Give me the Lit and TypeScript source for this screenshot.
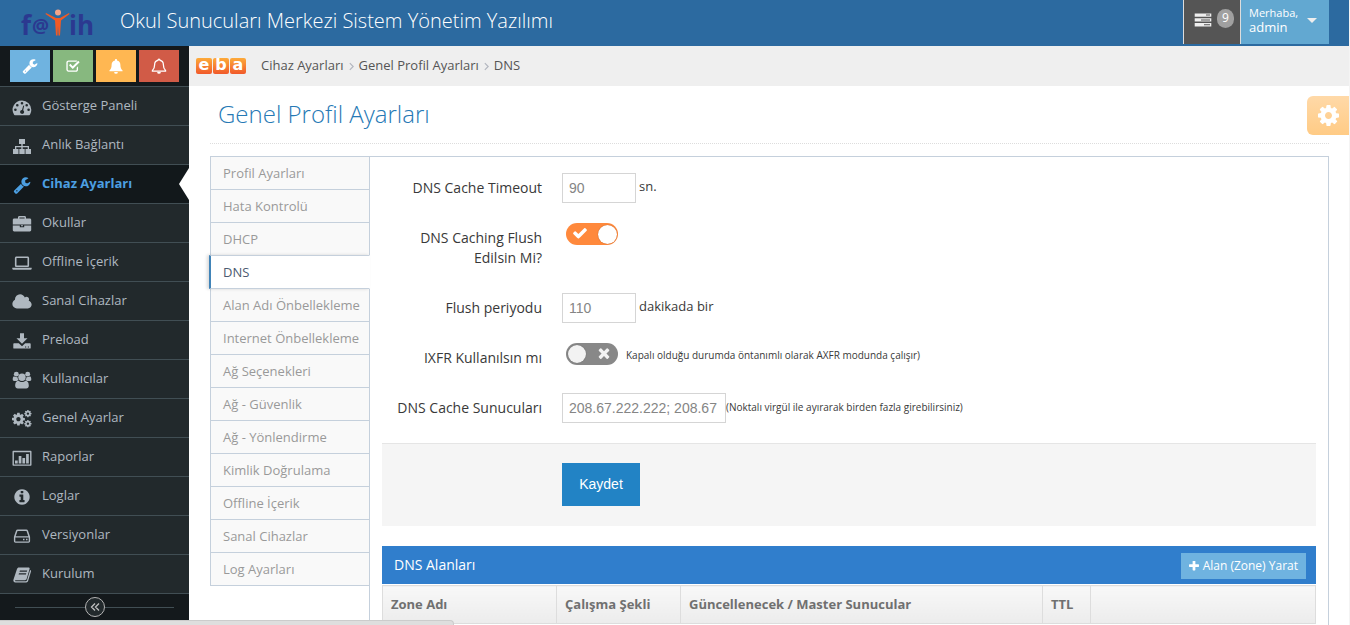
import { LitElement, html, svg, css, nothing } from 'lit';
import { customElement, property } from 'lit/decorators.js';
import { classMap } from 'lit/directives/class-map.js';

const COG =
  'M1152 896q0-106-75-181t-181-75-181 75-75 181 75 181 181 75 181-75 75-181zm512-109v222q0 12-8 23t-20 13l-185 28q-19 54-39 91 35 50 107 138 10 12 10 25t-9 23q-27 37-99 108t-94 71q-12 0-26-9l-138-108q-44 23-91 38-16 136-29 186-7 28-36 28h-222q-14 0-24.5-8.5t-11.5-21.5l-28-184q-49-16-90-37l-141 107q-10 9-25 9-14 0-25-11-126-114-165-168-7-10-7-23 0-12 8-23 15-21 51-66.5t54-70.5q-27-50-41-99l-183-27q-13-2-21-12.5t-8-23.5v-222q0-12 8-23t19-13l186-28q14-46 39-92-40-57-107-138-10-12-10-24 0-10 9-23 26-36 98.5-107.5t94.5-71.5q13 0 26 10l138 107q44-23 91-38 16-136 29-186 7-28 36-28h222q14 0 24.5 8.5t11.5 21.5l28 184q49 16 90 37l142-107q9-9 24-9 13 0 25 10 129 119 165 170 7 8 7 22 0 12-8 23-15 21-51 66.5t-54 70.5q26 50 41 98l183 28q13 2 21 12.5t8 23.5z';

const BELL = 'M10 1.2c.7 0 1.2.5 1.2 1.2v.5c2.600.5 4 2.600 4 5.200 0 3.600 1 5.400 2.600 6.700v.9H2.200v-.9C3.800 13.500 4.800 11.700 4.800 8.100c0-2.600 1.400-4.700 4-5.200v-.5c0-.7.5-1.200 1.200-1.200z';

type Glyph = { box: string; art: unknown };

const GLYPHS: Record<string, Glyph> = {
  wrench: {
    box: '0 0 1792 1792',
    art: svg`<path d="M448 1472q0-26-19-45t-45-19-45 19-19 45 19 45 45 19 45-19 19-45zm644-420l-682 682q-37 37-90 37-52 0-91-37l-106-108q-38-36-38-90 0-53 38-91l681-681q39 98 114.500 173.500t173.500 114.500zm634-435q0 39-23 106-47 134-164.500 217.500t-258.500 83.500q-185 0-316.500-131.500t-131.500-316.500 131.500-316.500 316.500-131.500q58 0 121.500 16.500t107.500 46.500q16 11 16 28t-16 28l-293 169v224l193 107q5-3 79-48.500t135.500-81 70.500-35.500q15 0 23.500 10t8.500 25z"/>`,
  },
  check: {
    box: '0 0 1792 1792',
    art: svg`<path d="M1671 566q0 40-28 68l-724 724-136 136q-28 28-68 28t-68-28l-136-136-362-362q-28-28-28-68t28-68l136-136q28-28 68-28t68 28l294 295 656-657q28-28 68-28t68 28l136 136q28 28 28 68z"/>`,
  },
  times: {
    box: '0 0 1792 1792',
    art: svg`<path d="M1490 1322q0 40-28 68l-136 136q-28 28-68 28t-68-28l-294-294-294 294q-28 28-68 28t-68-28l-136-136q-28-28-28-68t28-68l294-294-294-294q-28-28-28-68t28-68l136-136q28-28 68-28t68 28l294 294 294-294q28-28 68-28t68 28l136 136q28 28 28 68t-28 68l-294 294 294 294q28 28 28 68z"/>`,
  },
  plus: {
    box: '192 192 1408 1408',
    art: svg`<path d="M1600 736v192q0 40-28 68t-68 28h-416v416q0 40-28 68t-68 28h-192q-40 0-68-28t-28-68v-416h-416q-40 0-68-28t-28-68v-192q0-40 28-68t68-28h416v-416q0-40 28-68t68-28h192q40 0 68 28t28 68v416h416q40 0 68 28t28 68z"/>`,
  },
  cog: { box: '128 128 1536 1536', art: svg`<path d=${COG}/>` },
  cogs: {
    box: '0 0 20 18',
    art: svg`<path transform="translate(-1.100 1.600) scale(.00840)" d=${COG}/>
      <path transform="translate(11.700 -.6) scale(.00470)" d=${COG}/>
      <path transform="translate(11.700 9.500) scale(.00470)" d=${COG}/>`,
  },
  cloud: {
    box: '-64 0 1920 1792',
    art: svg`<path d="M1856 1152q0 159-112.500 271.500t-271.500 112.500h-1088q-185 0-316.500-131.500t-131.500-316.500q0-132 71-241.500t187-163.500q-2-28-2-43 0-212 150-362t362-150q158 0 286.500 88t187.500 230q70-62 166-62 106 0 181 75t75 181q0 75-41 138 129 30 213 134.500t84 239.500z"/>`,
  },
  info: {
    box: '0 0 1792 1792',
    art: svg`<path d="M1152 1376v-160q0-14-9-23t-23-9h-96v-512q0-14-9-23t-23-9h-320q-14 0-23 9t-9 23v160q0 14 9 23t23 9h96v320h-96q-14 0-23 9t-9 23v160q0 14 9 23t23 9h448q14 0 23-9t9-23zm-128-896v-160q0-14-9-23t-23-9h-192q-14 0-23 9t-9 23v160q0 14 9 23t23 9h192q14 0 23-9t9-23zm640 416q0 209-103 385.500t-279.500 279.500-385.500 103-385.500-103-279.500-279.500-103-385.500 103-385.500 279.500-279.500 385.500-103 385.500 103 279.500 279.500 103 385.500z"/>`,
  },
  gauge: {
    box: '0 0 20 18',
    art: svg`<path fill-rule="evenodd" d="M10 2.500a9.300 9.300 0 0 1 9.300 9.300c0 1.800-.5 3.500-1.400 5-.2.300-.4.400-.7.400H2.800c-.3 0-.5-.1-.7-.4A9.300 9.300 0 0 1 10 2.500zM3.400 10.500a1.300 1.300 0 1 0 0 2.600 1.300 1.300 0 0 0 0-2.600zM5.300 5.900a1.300 1.300 0 1 0 0 2.600 1.300 1.300 0 0 0 0-2.600zM10 4a1.300 1.300 0 1 0 0 2.600A1.300 1.300 0 0 0 10 4zM14.700 5.900a1.300 1.300 0 1 0 0 2.600 1.300 1.300 0 0 0 0-2.600zM16.600 10.500a1.300 1.300 0 1 0 0 2.600 1.300 1.300 0 0 0 0-2.600zM12.200 7.600l-1 .1-1.200 4.200a2 2 0 1 0 1.200.3z"/>`,
  },
  sitemap: {
    box: '0 0 20 18',
    art: svg`<path d="M7 2h6v5h-2.300v2H17v3h2v5h-5.500v-5h2.200v-1.700h-5V12h2v5H7.300v-5h2v-1.700h-5V12h2.200v5H1v-5h2V9h6.300V7H7z"/>`,
  },
  briefcase: {
    box: '0 0 20 18',
    art: svg`<path fill-rule="evenodd" d="M6 3.500V2.400C6 1.600 6.600 1 7.400 1h5.200c.8 0 1.400.6 1.400 1.400v1.100h3.800c.8 0 1.400.6 1.400 1.400v4.600H.8V4.900c0-.8.600-1.400 1.400-1.400zm1.400 0h5.200V2.400H7.400zM.8 10.500h7v1.700h4.400v-1.700h7v4.600c0 .8-.6 1.400-1.400 1.400H2.200c-.8 0-1.400-.6-1.400-1.400zM9 10.300h2v1H9z"/>`,
  },
  laptop: {
    box: '0 0 20 18',
    art: svg`<path fill-rule="evenodd" d="M4.500 2.500h11c1 0 1.600.7 1.600 1.600v7.300c0 .9-.7 1.600-1.600 1.600h-11c-1 0-1.600-.7-1.600-1.600V4.100c0-.9.7-1.600 1.600-1.600zm0 1.400v7.700h11V3.900zM.3 13.700h19.400v1c0 .7-.8 1.100-1.700 1.100H2c-1 0-1.700-.4-1.700-1.100z"/>`,
  },
  download: {
    box: '0 0 20 18',
    art: svg`<path fill-rule="evenodd" d="M8 1.300h4v5h3.500L10 11.700 4.500 6.300H8zM2 11.200h4.800l3.200 3 3.200-3H18c.4 0 .7.300.7.7v4c0 .4-.3.700-.7.700H2c-.4 0-.7-.3-.7-.7v-4c0-.4.3-.7.700-.7zm11 3.300v1h1.200v-1zm2.800 0v1H17v-1z"/>`,
  },
  users: {
    box: '0 0 20 19',
    art: svg`<circle cx="4" cy="3.300" r="2.600"/><circle cx="16" cy="3.300" r="2.600"/>
      <circle cx="10" cy="6.600" r="3.900"/>
      <path d="M5.300 6.500C3 6.500 1.600 6 1.500 5.600.8 6 .2 7 .2 8.900c0 1 .8 1.600 1.800 1.600h2.600c.6-.6 1.300-.9 1.900-1-.8-.9-1.200-1.900-1.200-3zM14.700 6.500c2.300 0 3.700-.5 3.800-.9.700.4 1.300 1.400 1.300 3.300 0 1-.8 1.600-1.800 1.600h-2.600c-.6-.6-1.300-.9-1.900-1 .8-.9 1.200-1.900 1.200-3zM6.300 10.200c1 .9 2.300 1.400 3.700 1.400s2.700-.5 3.700-1.400c2.600 0 3.500 2.600 3.500 5.500 0 1.700-1.200 2.700-2.800 2.700H5.600c-1.600 0-2.800-1-2.800-2.700 0-2.900.9-5.500 3.500-5.500z"/>`,
  },
  chart: {
    box: '0 0 20 18',
    art: svg`<path fill-rule="evenodd" d="M1.500 1.800h17c.6 0 1 .4 1 1v13c0 .6-.4 1-1 1h-17c-.6 0-1-.4-1-1v-13c0-.6.4-1 1-1zm.4 1.400v12.200h16.200V3.200zM3 11.500h2.700v2.900H3zM6.700 7h2.700v7.400H6.700zM10.400 9h2.700v5.400h-2.700zM14.100 5h2.700v9.400h-2.700z"/>`,
  },
  drive: {
    box: '0 0 20 18',
    art: svg`<path fill-rule="evenodd" d="M5.700 2.500h8.600c.8 0 1.400.4 1.700 1.200l1.900 5.500c.1.400.2.800.2 1.300v3.600c0 .9-.7 1.700-1.600 1.700h-13c-.9 0-1.600-.8-1.600-1.700v-3.600c0-.5.100-.9.200-1.300L4 3.700c.3-.8.900-1.200 1.700-1.200zm-.2 1.400L3.700 9.200h12.600l-1.800-5.300zM3.300 10.600v3.800h13.400v-3.800zM11 11.800h1.500v1.400H11zm3 0h1.500v1.400H14z"/>`,
  },
  book: {
    box: '0 0 20 18',
    art: svg`<path fill-rule="evenodd" d="M7 1.500h9.400c1 0 1.500.7 1.200 1.600l-3 9.900c-.2.700-.9 1.200-1.600 1.200H3.600c-.8 0-.8 1 0 1h10c.7 0 1.200-.4 1.400-1l3.100-10.300c1 .4 1.100 1 .9 1.700l-2.900 9.500c-.2.800-.9 1.400-1.800 1.400H3.500c-1.700 0-2.600-1.500-2-3L4.900 3.200C5.300 2 6 1.500 7 1.500zm.9 3-.4 1.300h7.300l.4-1.300zM7 7.300l-.4 1.300h7.300l.4-1.300z"/>`,
  },
  checkbox: {
    box: '0 0 20 18',
    art: svg`<path fill-rule="evenodd" d="M4.500 2h9.300c.6 0 1.100.1 1.600.4l-1.200 1.200H4.600c-.7 0-1.200.5-1.200 1.200v8.600c0 .7.5 1.200 1.200 1.200h8.800c.7 0 1.200-.5 1.200-1.200v-2.300l1.700-1.700v4.200c0 1.500-1.200 2.600-2.700 2.600H4.400c-1.500 0-2.700-1.200-2.700-2.700v-9C1.700 3.200 3 2 4.500 2z"/><path d="M5 8l1.700-1.700 3 3 6.800-6.800 1.800 1.800-8.600 8.500z"/>`,
  },
  bell: {
    box: '1 0 18 19',
    art: svg`<path d=${BELL}/><path d="M7.800 16.500h4.400a2.200 2.200 0 0 1-4.400 0z"/>`,
  },
  bellOutline: {
    box: '1 0 18 19',
    art: svg`<path d=${BELL} fill="none" stroke="currentColor" stroke-width="1.500"/><path d="M7.800 16.500h4.400a2.200 2.200 0 0 1-4.400 0z"/>`,
  },
  tasks: {
    box: '0 0 18 14',
    art: svg`<path fill-rule="evenodd" d="M.7.500h16.600v3.300H.7zM12 1.600v1h4v-1zM.7 5.300h16.600v3.300H.7zM7 6.400v1h9v-1zM.7 10.100h16.600v3.300H.7zM10 11.200v1h6v-1z"/>`,
  },
  angle: {
    box: '0 0 6 10',
    art: svg`<path d="M1 1l4 4-4 4" fill="none" stroke="currentColor" stroke-width="1.400"/>`,
  },
  angles: {
    box: '0 0 10 10',
    art: svg`<path d="M5 1.500L1.500 5 5 8.500M9 1.500L5.500 5 9 8.500" fill="none" stroke="currentColor" stroke-width="1.300"/>`,
  },
};

@customElement('ui-icon')
class UiIcon extends LitElement {
  @property() name = '';

  static styles = css`
    :host { display: inline-flex; flex: none; }
    svg { display: block; width: 100%; height: 100%; fill: currentColor; }
  `;

  render() {
    const glyph = GLYPHS[this.name];
    return glyph ? html`<svg viewBox=${glyph.box} aria-hidden="true">${glyph.art}</svg>` : nothing;
  }
}

const MENU: [string, string][] = [
  ['gauge', 'Gösterge Paneli'],
  ['sitemap', 'Anlık Bağlantı'],
  ['wrench', 'Cihaz Ayarları'],
  ['briefcase', 'Okullar'],
  ['laptop', 'Offline İçerik'],
  ['cloud', 'Sanal Cihazlar'],
  ['download', 'Preload'],
  ['users', 'Kullanıcılar'],
  ['cogs', 'Genel Ayarlar'],
  ['chart', 'Raporlar'],
  ['info', 'Loglar'],
  ['drive', 'Versiyonlar'],
  ['book', 'Kurulum'],
];

const TABS = [
  'Profil Ayarları', 'Hata Kontrolü', 'DHCP', 'DNS', 'Alan Adı Önbellekleme',
  'Internet Önbellekleme', 'Ağ Seçenekleri', 'Ağ - Güvenlik', 'Ağ - Yönlendirme',
  'Kimlik Doğrulama', 'Offline İçerik', 'Sanal Cihazlar', 'Log Ayarları',
];

@customElement('app-root')
class AppRoot extends LitElement {
  static styles = css`
    :host {
      display: flex;
      flex-direction: column;
      min-height: 100vh;
      box-sizing: border-box;
      border-right: 1px solid #f4f4f4;
      background: #fff;
      color: #393939;
      font: 13px/20px "Open Sans", "Noto Sans", sans-serif;
    }
    * { box-sizing: border-box; }
    a { color: inherit; text-decoration: none; }
    button { font: inherit; border: 0; padding: 0; cursor: pointer; }

    .navbar {
      display: flex;
      height: 46px;
      padding: 0 20px;
      background: #2c6aa0;
      color: #fff;
    }
    .logo { width: 76px; height: 38px; margin: 0 24px 0 0; }
    .logo svg { display: block; overflow: visible; }
    .logo text { font-family: "Open Sans", sans-serif; font-weight: 700; fill: #2b3990; }
    .product { font-size: 20px; font-weight: 300; line-height: 42px; }
    .user-area { display: flex; height: 44px; margin-left: auto; }
    .tasks {
      display: flex;
      align-items: flex-start;
      gap: 5px;
      width: 57px;
      padding: 9px 0 0 10px;
      border-left: 1px solid #ddd;
      background: #555;
      color: #fff;
    }
    .tasks ui-icon { width: 18px; height: 14px; margin-top: 4px; color: #eee; }
    .badge {
      width: 17px;
      height: 19px;
      border-radius: 9px;
      background: #a0a0a0;
      font-size: 12px;
      line-height: 18px;
      text-align: center;
    }
    .user {
      display: flex;
      align-items: center;
      justify-content: space-between;
      width: 89px;
      padding: 0 12px 4px 8px;
      border-left: 1px solid #ddd;
      background: #62a8d1;
      color: #fff;
      text-align: left;
      line-height: 14px;
    }
    .hello { display: block; font-size: 11px; }
    .caret { border: 5px solid transparent; border-top-color: #eee; border-bottom: 0; }

    .frame { display: flex; flex: 1; align-items: stretch; }
    .sidebar { flex: none; width: 189px; background: #22292c; align-self: flex-start; }
    .shortcuts { display: flex; gap: 3px; height: 40px; padding: 4px 10px; background: #14191c; }
    .shortcut { display: flex; align-items: center; justify-content: center; width: 40px; height: 32px; color: #fff; }
    .shortcut ui-icon { width: 16px; height: 16px; }
    .blue { background: #6fb3e0; }
    .green { background: #87b87f; }
    .orange { background: #ffb752; }
    .red { background: #d15b47; }
    .menu { margin: 0; padding: 0; list-style: none; }
    .menu-link {
      position: relative;
      display: flex;
      align-items: center;
      gap: 10px;
      height: 39px;
      padding: 0 0 3px 12px;
      border-top: 1px solid #414e54;
      color: #afb8c0;
    }
    .menu-link ui-icon { width: 20px; height: 18px; margin-top: 4px; }
    .menu-link.active { background: #12181b; color: #4c9fe2; font-weight: 700; }
    .menu-link.active::after {
      content: "";
      position: absolute;
      top: 3px;
      right: 0;
      border: 16px solid transparent;
      border-right: 10px solid #fff;
      border-left: 0;
    }
    .collapse {
      display: flex;
      align-items: center;
      height: 28px;
      padding: 0 15px;
      border-top: 1px solid #414e54;
      border-bottom: 1px solid #414e54;
      background: #14191c;
    }
    .collapse::before, .collapse::after { content: ""; flex: 1; height: 1px; background: #414e54; }
    .collapse-button {
      display: flex;
      align-items: center;
      justify-content: center;
      width: 20px;
      height: 20px;
      border: 1px solid #b5b5b5;
      border-radius: 50%;
      background: #22292c;
      color: #c0c0c0;
    }
    .collapse-button ui-icon { width: 10px; height: 10px; }

    .main { position: relative; display: flex; flex: 1; flex-direction: column; min-width: 0; }
    .crumbs {
      display: flex;
      align-items: center;
      height: 40px;
      padding: 0 7px 2px;
      background: #efefef;
      color: #555;
    }
    .eba { display: flex; gap: 1px; margin-right: 15px; padding-top: 2px; }
    .eba-tile {
      width: 16px;
      height: 16px;
      border-radius: 2px;
      background: linear-gradient(#fdab3a, #f1592a);
      color: #fff;
      font: 700 16px/14px "DejaVu Sans", sans-serif;
      text-align: center;
    }
    .crumb-list { display: flex; align-items: center; margin: 0; padding: 0; list-style: none; }
    .crumb { display: flex; align-items: center; }
    .crumb ui-icon { width: 5px; height: 9px; margin: 2px 5px 0; color: #b2b6bf; }
    .settings {
      position: absolute;
      top: 50px;
      right: 0;
      display: flex;
      align-items: center;
      justify-content: center;
      width: 42px;
      height: 39px;
      border-radius: 6px 0 0 6px;
      background: linear-gradient(#ffd9a8, #ffcb85);
      color: #fff;
    }
    .settings ui-icon { width: 21px; height: 21px; }
    .content { display: flex; flex: 1; flex-direction: column; padding: 8px 20px 0 21px; }
    .title {
      margin: 0 0 12px;
      padding: 4px 8px 13px;
      border-bottom: 1px dotted #ddd;
      color: #2679b5;
      font-size: 24px;
      font-weight: 300;
      line-height: 32px;
    }
    .tabbed { display: flex; flex: 1; }
    .tabs { position: relative; z-index: 1; flex: none; align-self: flex-start; width: 160px; margin: 0 -1px 0 0; padding: 0; list-style: none; }
    .tab {
      display: block;
      height: 34px;
      margin-bottom: -1px;
      padding: 6px 0 6px 12px;
      border: 1px solid #c5d0dc;
      background: #f9f9f9;
      color: #999;
      white-space: nowrap;
    }
    .tab.active {
      position: relative;
      margin-left: -1px;
      border-left: 2px solid #4184b8;
      border-right-color: #fff;
      background: #fff;
      color: #4c5a70;
      box-shadow: -2px 0 3px rgba(0, 0, 0, 0.15);
    }
    .pane { flex: 1; min-width: 0; padding: 16px 12px 0; border: 1px solid #c5d0dc; border-bottom: 0; }
    .row { display: flex; gap: 20px; margin-bottom: 20px; }
    .label { flex: none; width: 160px; padding: 5px 0; font-size: 14px; text-align: right; }
    .field { display: flex; align-items: flex-start; min-height: 30px; }
    .input {
      width: 74px;
      height: 30px;
      padding: 4px 6px;
      border: 1px solid #d5d5d5;
      border-radius: 0;
      background: #fff;
      color: #858585;
      font: 14px/20px "Liberation Sans", Arial, sans-serif;
    }
    .input.wide { width: 164px; padding-right: 8px; }
    .unit { padding: 3px; }
    .hint { padding: 4px 0; font-size: 10px; }
    .toggle + .hint { padding: 2px 0; }
    .toggle { position: relative; display: block; width: 52px; height: 22px; margin: 0 8px 0 4px; }
    .toggle input { position: absolute; inset: 0; width: 100%; height: 100%; margin: 0; opacity: 0; cursor: pointer; }
    .track {
      display: flex;
      flex-direction: row-reverse;
      align-items: center;
      justify-content: space-between;
      height: 22px;
      padding: 0 6px 0 2px;
      border-radius: 11px;
      background: #888;
      color: #f2f2f2;
    }
    .track::after { content: ""; width: 18px; height: 18px; border-radius: 50%; background: #f2f2f2; box-shadow: 0 0 1px #555; }
    .track ui-icon { width: 16px; height: 16px; margin-bottom: 2px; }
    input:checked + .track { flex-direction: row; padding: 0 1px 0 6px; background: #ff893c; color: #fff; }
    input:checked + .track::after { width: 19px; height: 19px; background: #fff; box-shadow: 0 0 1px #a04000; }
    .actions { padding: 19px 180px 20px; border-top: 1px solid #e5e5e5; background: #f5f5f5; }
    .save {
      display: block;
      width: 78px;
      height: 43px;
      padding-bottom: 2px;
      background: #2283c5;
      color: #fff;
      font: 14px/20px "Liberation Sans", Arial, sans-serif;
    }
    .table-head {
      display: flex;
      align-items: center;
      justify-content: space-between;
      height: 38px;
      margin: 20px 0 1px;
      padding: 0 10px 0 12px;
      background: #307ecc;
      color: #fff;
    }
    .table-title { margin: 0; font-size: 14px; font-weight: 400; }
    .add {
      display: flex;
      align-items: center;
      gap: 4px;
      height: 26px;
      margin-top: 2px;
      padding: 0 8px;
      background: #6fb3e0;
      color: #fff;
      font-size: 12px;
    }
    .add ui-icon { width: 10px; height: 10px; }
    .zones { width: 100%; border-collapse: collapse; table-layout: fixed; }
    .zones th {
      height: 38px;
      padding: 0 8px 2px;
      border: 1px solid #ddd;
      background: linear-gradient(#f8f8f8, #ececec);
      color: #707070;
      font-weight: 700;
      text-align: left;
    }
    .col-zone { width: 174px; }
    .col-mode { width: 124px; }
    .col-servers { width: 362px; }
    .col-ttl { width: 48px; }
    .status {
      position: fixed;
      z-index: 2;
      bottom: 0;
      left: 0;
      width: 454px;
      height: 5px;
      border-top: 1px solid #ccc;
      border-right: 1px solid #ccc;
      border-radius: 0 4px 0 0;
      background: #dedede;
    }
  `;

  private row(id: string, label: string, control: unknown) {
    return html`<div class="row"><label class="label" for=${id}>${label}</label><div class="field">${control}</div></div>`;
  }

  private toggle(id: string, on: boolean) {
    return html`<span class="toggle">
      <input type="checkbox" id=${id} .checked=${on} />
      <span class="track"><ui-icon name=${on ? 'check' : 'times'}></ui-icon></span>
    </span>`;
  }

  render() {
    return html`
      <header class="navbar">
        <a class="logo" href="#" aria-label="Fatih">
          <svg width="76" height="46" viewBox="0 -8 76 46">
            <text x="1" y="27" font-size="26">f</text>
            <text x="12" y="25" font-size="19">@</text>
            <text x="49" y="27" font-size="26">ih</text>
            <circle cx="38" cy="4.500" r="3" fill="#f3a489" />
            <path d="M26 5l10 5h4l9-5 .5 1-8.500 6.500-1 15h-1.500L38 18l-.5 9.500H36l-1-15L25.500 6z" fill="#f15a24" />
          </svg>
        </a>
        <span class="product">Okul Sunucuları Merkezi Sistem Yönetim Yazılımı</span>
        <div class="user-area">
          <button class="tasks" aria-label="Görevler"><ui-icon name="tasks"></ui-icon><span class="badge">9</span></button>
          <button class="user"><span><span class="hello">Merhaba,</span>admin</span><span class="caret"></span></button>
        </div>
      </header>
      <div class="frame">
        <aside class="sidebar">
          <div class="shortcuts">
            <button class="shortcut blue" aria-label="Ayarlar"><ui-icon name="wrench"></ui-icon></button>
            <button class="shortcut green" aria-label="Onay"><ui-icon name="checkbox"></ui-icon></button>
            <button class="shortcut orange" aria-label="Bildirimler"><ui-icon name="bell"></ui-icon></button>
            <button class="shortcut red" aria-label="Uyarılar"><ui-icon name="bellOutline"></ui-icon></button>
          </div>
          <nav>
            <ul class="menu">
              ${MENU.map(([icon, text], i) => html`<li>
                <a class=${classMap({ 'menu-link': true, active: i === 2 })} href="#"><ui-icon name=${icon}></ui-icon>${text}</a>
              </li>`)}
            </ul>
          </nav>
          <div class="collapse"><button class="collapse-button" aria-label="Menüyü daralt"><ui-icon name="angles"></ui-icon></button></div>
        </aside>
        <main class="main">
          <div class="crumbs">
            <a class="eba" href="#">${['e', 'b', 'a'].map((c) => html`<span class="eba-tile">${c}</span>`)}</a>
            <ol class="crumb-list">
              <li class="crumb"><a href="#">Cihaz Ayarları</a></li>
              <li class="crumb"><ui-icon name="angle"></ui-icon><a href="#">Genel Profil Ayarları</a></li>
              <li class="crumb"><ui-icon name="angle"></ui-icon>DNS</li>
            </ol>
          </div>
          <button class="settings" aria-label="Tema ayarları"><ui-icon name="cog"></ui-icon></button>
          <div class="content">
            <h1 class="title">Genel Profil Ayarları</h1>
            <div class="tabbed">
              <ul class="tabs">
                ${TABS.map((t) => html`<li><a class=${classMap({ tab: true, active: t === 'DNS' })} href="#">${t}</a></li>`)}
              </ul>
              <section class="pane">
                <form>
                  ${this.row('timeout', 'DNS Cache Timeout', html`<input class="input" id="timeout" value="90" /><span class="unit">sn.</span>`)}
                  ${this.row('flush', 'DNS Caching Flush Edilsin Mi?', this.toggle('flush', true))}
                  ${this.row('period', 'Flush periyodu', html`<input class="input" id="period" value="110" /><span class="unit">dakikada bir</span>`)}
                  ${this.row('ixfr', 'IXFR Kullanılsın mı', html`${this.toggle('ixfr', false)}<span class="hint">Kapalı olduğu durumda öntanımlı olarak AXFR modunda çalışır)</span>`)}
                  ${this.row('servers', 'DNS Cache Sunucuları', html`<input class="input wide" id="servers" value="208.67.222.222; 208.67.220.220" /><span class="hint">(Noktalı virgül ile ayırarak birden fazla girebilirsiniz)</span>`)}
                  <div class="actions"><button class="save" type="button">Kaydet</button></div>
                </form>
                <div class="table-head">
                  <h2 class="table-title">DNS Alanları</h2>
                  <button class="add"><ui-icon name="plus"></ui-icon>Alan (Zone) Yarat</button>
                </div>
                <table class="zones">
                  <thead>
                    <tr>
                      <th class="col-zone">Zone Adı</th>
                      <th class="col-mode">Çalışma Şekli</th>
                      <th class="col-servers">Güncellenecek / Master Sunucular</th>
                      <th class="col-ttl">TTL</th>
                      <th></th>
                    </tr>
                  </thead>
                </table>
              </section>
            </div>
          </div>
        </main>
      </div>
      <div class="status"></div>
    `;
  }
}
